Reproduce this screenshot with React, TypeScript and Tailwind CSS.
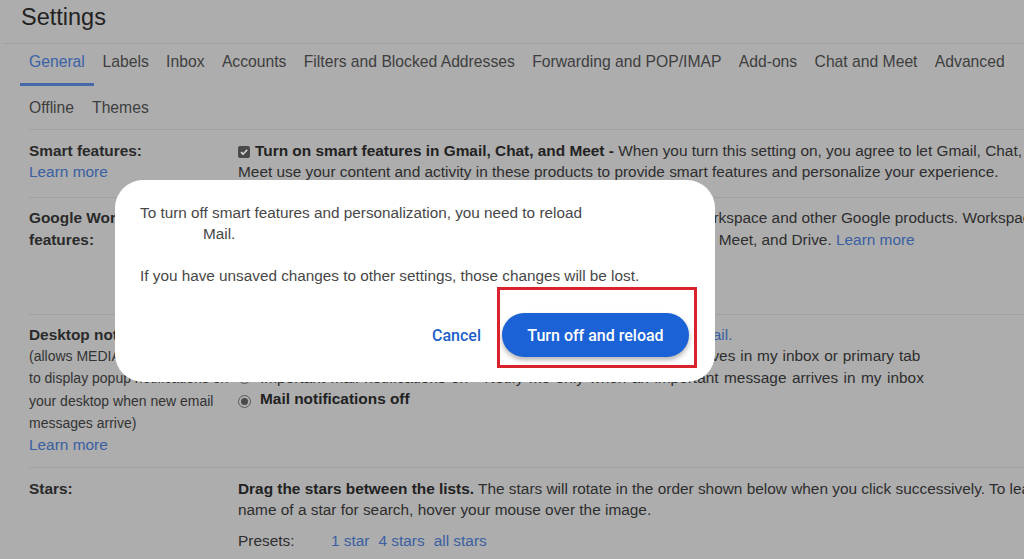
import React from "react";

const tabs1 = ["General", "Labels", "Inbox", "Accounts", "Filters and Blocked Addresses", "Forwarding and POP/IMAP", "Add-ons", "Chat and Meet", "Advanced"];
const tabs2 = ["Offline", "Themes"];

function Checkbox() {
  return (
    <span className="inline-flex w-[12px] h-[12px] mr-[5px] rounded-[2px] bg-[#4a4a4a] items-center justify-center align-[-1px]">
      <svg width="10" height="10" viewBox="0 0 10 10">
        <path d="M2 5.2 L4.1 7.2 L8.2 2.8" stroke="#d8d8d8" strokeWidth="1.6" fill="none" />
      </svg>
    </span>
  );
}

function Radio({ checked }: { checked?: boolean }) {
  return (
    <span className="inline-flex w-[13px] h-[13px] mr-[9px] rounded-full border-[1.5px] border-[#5a5a5a] items-center justify-center align-[-1px]">
      {checked && <span className="w-[7px] h-[7px] rounded-full bg-[#4a4a4a]" />}
    </span>
  );
}

export default function App() {
  return (
    <div className="relative w-[1024px] h-[559px] overflow-hidden bg-[#adadad] font-['Liberation_Sans',_Arial,_sans-serif] text-[#262626]">
      <div className="h-[43px] pl-[21px] pt-[2px] text-[23.5px] leading-[30px] text-[#222]">Settings</div>
      <div className="ml-[4px] border-t border-[#a0a0a0]">
        <div className="flex pl-[16px] h-[42px]">
          {tabs1.map((t, i) => (
            <div
              key={t}
              className={
                i === 0
                  ? "px-[9px] flex items-center text-[15.7px] text-[#3a61a5] border-b-[3px] border-[#4468a8] pb-[3px] whitespace-nowrap"
                  : "px-[8.7px] flex items-center text-[15.7px] text-[#3e3e3e] pb-[6px] whitespace-nowrap"
              }
            >
              {t}
            </div>
          ))}
        </div>
        <div className="flex pl-[16px] h-[43px]">
          {tabs2.map((t) => (
            <div key={t} className="px-[9px] flex items-center text-[15.7px] text-[#3e3e3e] whitespace-nowrap">
              {t}
            </div>
          ))}
        </div>
      </div>

      <div className="ml-[29px] border-t border-[#a0a0a0]">
        {/* Smart features */}
        <div className="flex h-[67px] pt-[10px] text-[15.4px] leading-[21px]">
          <div className="w-[209px] shrink-0">
            <div className="font-bold text-[#2a2a2a]">Smart features:</div>
            <div className="text-[#3a5fa2]">Learn more</div>
          </div>
          <div className="whitespace-nowrap text-[#2e2e2e]">
            <div>
              <Checkbox />
              <span className="font-bold text-[#222]">Turn on smart features in Gmail, Chat, and Meet - </span>
              When you turn this setting on, you agree to let Gmail, Chat, and
            </div>
            <div>Meet use your content and activity in these products to provide smart features and personalize your experience.</div>
          </div>
        </div>

        {/* Google Workspace */}
        <div className="flex h-[117px] pt-[9px] text-[15.4px] leading-[22px] border-t border-[#a0a0a0]">
          <div className="w-[209px] shrink-0 font-bold text-[#2a2a2a]">
            <div>Google Workspace smart</div>
            <div>features:</div>
          </div>
          <div className="whitespace-nowrap text-[#2e2e2e]">
            <div>
              <Checkbox />
              <span className="font-bold text-[#222]">Turn on smart features in Google Workspace - </span>
              Use it to help Workspace and other Google products. Workspace
            </div>
            <div>
              includes apps like Gmail, Chat, Calendar, Docs, Sheets, Slides, Keep, Meet, and Drive. <span className="text-[#3a5fa2]">Learn more</span>
            </div>
          </div>
        </div>

        {/* Desktop notifications */}
        <div className="flex h-[153px] pt-[9px] border-t border-[#a0a0a0]">
          <div className="w-[209px] shrink-0">
            <div className="font-bold text-[15.4px] leading-[21px] text-[#2a2a2a]">Desktop notifications:</div>
            <div className="text-[14px] leading-[22.3px] text-[#333]">
              (allows MEDIA.com Mail
              <br />
              to display popup notifications on
              <br />
              your desktop when new email
              <br />
              messages arrive)
            </div>
            <div className="text-[15.4px] leading-[21px] text-[#3a5fa2]">Learn more</div>
          </div>
          <div className="whitespace-nowrap text-[15.4px] leading-[21.3px] text-[#2e2e2e]">
            <div className="text-[#3a5fa2]">Please click here to enable desktop notifications for MEDIA.com.au Mail.</div>
            <div className="[word-spacing:0.6px]">
              <Radio />
              New mail notifications on - Notify me when any new message arrives in my inbox or primary tab
            </div>
            <div className="[word-spacing:1.2px]">
              <Radio />
              Important mail notifications on - Notify me only when an important message arrives in my inbox
            </div>
            <div>
              <Radio checked />
              <span className="font-bold text-[#222]">Mail notifications off</span>
            </div>
          </div>
        </div>

        {/* Stars */}
        <div className="flex pt-[10px] border-t border-[#a0a0a0] text-[15.4px] leading-[21px]">
          <div className="w-[209px] shrink-0 font-bold text-[#2a2a2a]">Stars:</div>
          <div className="whitespace-nowrap text-[#2e2e2e]">
            <div>
              <span className="font-bold text-[#222]">Drag the stars between the lists.</span>
              {"  "}The stars will rotate in the order shown below when you click successively. To learn the
            </div>
            <div>name of a star for search, hover your mouse over the image.</div>
            <div className="flex mt-[10px]">
              <span className="w-[93px]">Presets:</span>
              <span className="text-[#3a5fa2] mr-[9px]">1 star</span>
              <span className="text-[#3a5fa2] mr-[9px]">4 stars</span>
              <span className="text-[#3a5fa2]">all stars</span>
            </div>
          </div>
        </div>
      </div>

      {/* Dialog */}
      <div className="absolute left-[115px] top-[180px] w-[600px] h-[202px] bg-white rounded-[28px] pl-[25px] pr-[25px] pt-[22px] text-[15.3px] leading-[21px] text-[#474747]">
        <div>To turn off smart features and personalization, you need to reload</div>
        <div className="pl-[63px]">Mail.</div>
        <div className="mt-[21px]">If you have unsaved changes to other settings, those changes will be lost.</div>
        <div className="flex justify-end items-center mt-[27px] pr-[1px] font-['Roboto',_sans-serif]">
          <button className="text-[16px] font-medium text-[#1c5fc8] mr-[21px]">Cancel</button>
          <button className="h-[44px] w-[187px] rounded-full bg-[#1a62d6] text-white text-[16px] font-medium shadow-[0_3px_5px_rgba(0,0,0,0.3)]">
            Turn off and reload
          </button>
        </div>
      </div>

      {/* Red highlight */}
      <div className="absolute left-[497px] top-[287px] w-[200px] h-[81px] border-[3px] border-[#d8232c]" />
    </div>
  );
}
